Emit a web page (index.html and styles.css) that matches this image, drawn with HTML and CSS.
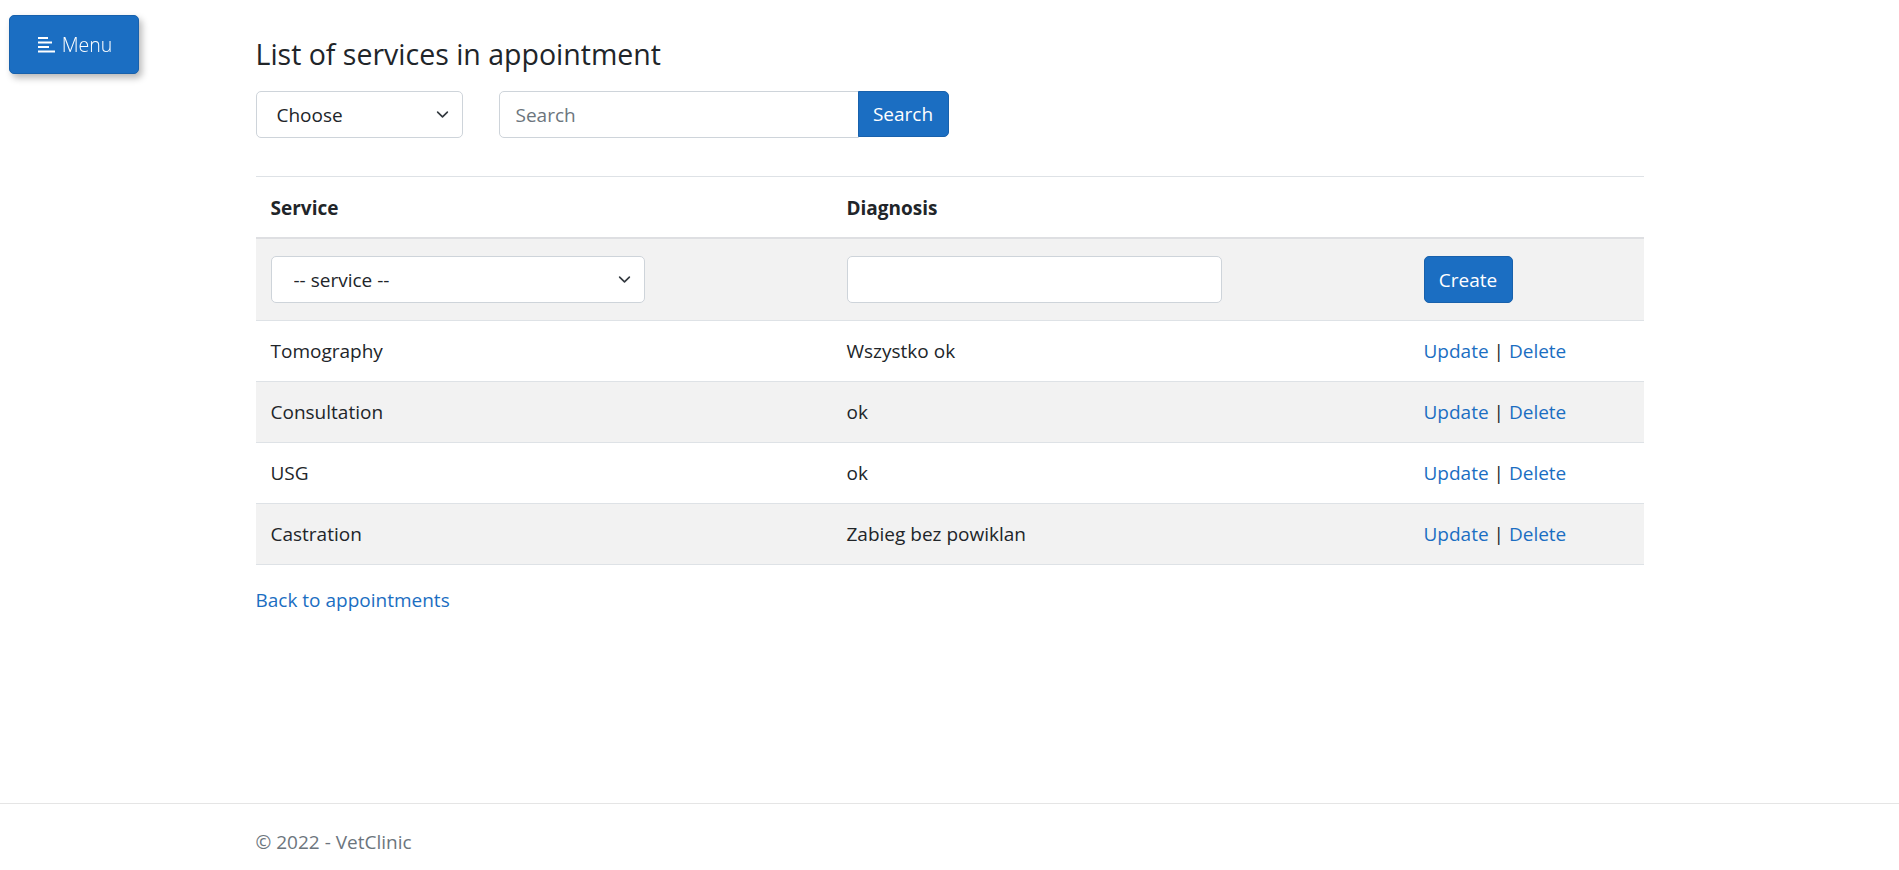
FILE: index.html
```html
<!DOCTYPE html>
<html lang="en">
<head>
<meta charset="utf-8">
<title>VetClinic</title>
<link rel="stylesheet" href="styles.css">
</head>
<body>
<button class="menu-btn" type="button">
  <svg class="menu-icon" width="18" height="16" viewBox="0 0 18 16" aria-hidden="true">
    <rect x="0" y="0" width="10" height="2" fill="#fff"/>
    <rect x="0" y="4.5" width="14" height="2" fill="#fff"/>
    <rect x="0" y="9" width="11" height="2" fill="#fff"/>
    <rect x="0" y="13.5" width="17" height="2" fill="#fff"/>
  </svg>
  <span>Menu</span>
</button>

<div class="page">
  <main class="container">
    <h3 class="title">List of services in appointment</h3>

    <form class="filters">
      <select class="form-select choose">
        <option>Choose</option>
      </select>
      <div class="input-group">
        <input class="form-control search-input" type="text" placeholder="Search">
        <button class="btn btn-primary search-btn" type="button">Search</button>
      </div>
    </form>

    <table class="table">
      <colgroup>
        <col class="c1"><col class="c2"><col class="c3">
      </colgroup>
      <thead>
        <tr><th>Service</th><th>Diagnosis</th><th></th></tr>
      </thead>
      <tbody>
        <tr class="create-row striped">
          <td><select class="form-select svc"><option>-- service --</option></select></td>
          <td><input class="form-control diag" type="text"></td>
          <td><button class="btn btn-primary create-btn" type="button">Create</button></td>
        </tr>
        <tr><td>Tomography</td><td>Wszystko ok</td><td><a href="#">Update</a> | <a href="#">Delete</a></td></tr>
        <tr class="striped"><td>Consultation</td><td>ok</td><td><a href="#">Update</a> | <a href="#">Delete</a></td></tr>
        <tr><td>USG</td><td>ok</td><td><a href="#">Update</a> | <a href="#">Delete</a></td></tr>
        <tr class="striped"><td>Castration</td><td>Zabieg bez powiklan</td><td><a href="#">Update</a> | <a href="#">Delete</a></td></tr>
      </tbody>
    </table>

    <a class="back" href="#">Back to appointments</a>
  </main>

  <footer class="footer">
    <div class="container">© 2022 - VetClinic</div>
  </footer>
</div>
</body>
</html>
```
FILE: styles.css
```css
* { box-sizing: border-box; }

html, body {
  margin: 0;
  height: 870px;
  overflow: hidden;
}

body {
  font-family: "Open Sans", "Noto Sans", "Liberation Sans", sans-serif;
  font-size: 19px;
  line-height: 30px;
  color: #212529;
  background: #fff;
}

a { color: #1b6ec2; text-decoration: none; }

.page {
  display: flex;
  flex-direction: column;
  height: 870px;
}

.container {
  width: 1388px;
  margin: 0 auto;
}

main.container { flex: 1; padding-top: 34px; }

/* Menu button overlay */
.menu-btn {
  position: fixed;
  top: 15px;
  left: 9px;
  width: 130px;
  height: 59px;
  display: flex;
  align-items: center;
  justify-content: center;
  gap: 6px;
  background: #1b6ec2;
  border: 1px solid #1861ac;
  border-radius: 5px;
  color: #fff;
  font-family: "Open Sans", "Noto Sans", sans-serif;
  font-weight: 300;
  font-size: 19.5px;
  box-shadow: 3px 4px 7px rgba(0, 0, 0, 0.28);
  padding: 0 0 0 2px;
}
.menu-icon { display: block; margin-top: 1px; }

.title {
  margin: 0 0 17px;
  font-size: 28.5px;
  line-height: 40px;
  font-weight: 400;
  color: #212529;
}

.filters {
  display: flex;
  align-items: center;
  gap: 36px;
  margin-bottom: 38px;
}

.form-select, .form-control {
  font-family: inherit;
  font-size: 19px;
  color: #212529;
  background-color: #fff;
  border: 1px solid #ced4da;
  border-radius: 5px;
  height: 47px;
  outline: none;
}

.form-select {
  appearance: none;
  -webkit-appearance: none;
  padding: 0 40px 0 20px;
  background-image: url("data:image/svg+xml,%3csvg xmlns='http://www.w3.org/2000/svg' viewBox='0 0 16 16'%3e%3cpath fill='none' stroke='%23343a40' stroke-linecap='round' stroke-linejoin='round' stroke-width='2' d='m2 5 6 6 6-6'/%3e%3c/svg%3e");
  background-repeat: no-repeat;
  background-position: right 13px center;
  background-size: 13px 13px;
}

.form-control { padding: 0 16px; }
.form-control::placeholder { color: #6c757d; opacity: 1; }

.choose { width: 207px; }

.input-group { display: flex; }
.search-input {
  width: 360px;
  border-top-right-radius: 0;
  border-bottom-right-radius: 0;
}

.btn {
  font-family: inherit;
  font-size: 19px;
  border-radius: 5px;
  cursor: pointer;
}
.btn-primary {
  color: #fff;
  background: #1b6ec2;
  border: 1px solid #1861ac;
}
.search-btn {
  width: 91px;
  height: 46px;
  margin-left: -1px;
  border-top-left-radius: 0;
  border-bottom-left-radius: 0;
  padding: 0;
}

.table {
  width: 1388px;
  border-collapse: collapse;
  border-top: 1px solid #dee2e6;
  margin-bottom: 20px;
}
.c1 { width: 576px; }
.c2 { width: 577px; }

.table th, .table td {
  text-align: left;
  vertical-align: middle;
  padding: 15px 15px;
  border-bottom: 1px solid #dee2e6;
}
.table th {
  font-weight: 700;
  padding: 16px 15px 14px;
  border-bottom: 2px solid #dedfe2;
}
.table tr.striped td { background: #f2f2f2; }

.create-row td { padding: 17px 15px 17px; }
.svc { width: 374px; display: block; padding-left: 22px; }
.diag { width: 375px; display: block; }
.create-btn {
  height: 47px;
  width: 89px;
  padding: 0;
  display: block;
}

.back { display: inline-block; }

.footer {
  border-top: 1px solid #e5e5e5;
  height: 67px;
  padding-top: 23px;
  color: #6c757d;
  margin-top: 0;
}
```
